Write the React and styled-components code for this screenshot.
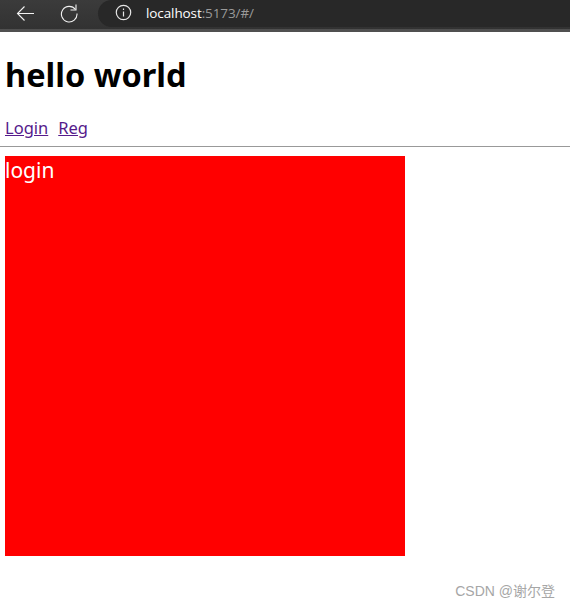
import React from "react";
import styled, { createGlobalStyle } from "styled-components";

const GlobalStyle = createGlobalStyle`
  html, body {
    margin: 0;
    padding: 0;
    background: #fff;
    font-family: "Noto Sans", "Noto Sans CJK SC", sans-serif;
  }
`;

const Page = styled.div`
  position: relative;
  width: 570px;
  height: 607px;
  overflow: hidden;
`;

const Toolbar = styled.div`
  display: flex;
  align-items: center;
  height: 29px;
  padding-left: 15px;
  background: linear-gradient(#3b3b3b, #323232);
  border-bottom: 3px solid #505050;
`;

const ToolButton = styled.svg`
  width: 20px;
  height: 20px;
  margin-top: -3px;
  margin-right: ${(p) => p.$gap}px;
  fill: none;
  stroke: #f2f2f2;
  stroke-width: 1.1;
  flex: none;
`;

const AddressBar = styled.div`
  display: flex;
  align-items: center;
  flex: 1;
  height: 27px;
  margin-top: -2px;
  padding-left: 17px;
  border-radius: 14px 0 0 14px;
  background: #282828;
`;

const InfoIcon = styled.svg`
  width: 17px;
  height: 17px;
  margin-top: -2px;
  margin-right: 14px;
  fill: none;
  stroke: #e6e6e6;
  stroke-width: 1.2;
`;

const Host = styled.span`
  font-family: "Open Sans", sans-serif;
  font-size: 13.5px;
  letter-spacing: -0.1px;
  margin-top: -2px;
  color: #fff;
`;

const Rest = styled.span`
  color: #9a9a9a;
`;

const Content = styled.div`
  padding: 0 0 0 5px;
`;

const Title = styled.h1`
  margin: 21px 0 0;
  font-size: 32.5px;
  line-height: 44px;
  font-weight: 700;
  color: #000;
`;

const Nav = styled.nav`
  display: flex;
  gap: 10px;
  margin-top: 18px;
  font-size: 16.5px;
  line-height: 25px;
`;

const NavLink = styled.a`
  color: #551a8b;
  text-decoration: underline;
`;

const Divider = styled.hr`
  height: 1px;
  margin: 6px 0 9px -5px;
  border: none;
  background: #999;
`;

const RedBox = styled.div`
  width: 400px;
  height: 400px;
  background: #f00;
  color: #fff;
  font-size: 21px;
  line-height: 28px;
`;

const Watermark = styled.div`
  position: absolute;
  right: 15px;
  top: 582px;
  font-family: "Liberation Sans", "Noto Sans CJK SC", sans-serif;
  font-size: 14px;
  line-height: 18px;
  color: #a6a6a6;
`;

export default function App() {
  return (
    <Page>
      <GlobalStyle />
      <Toolbar>
        <ToolButton $gap={24} viewBox="0 0 20 20">
          <path d="M19 10.5H2.5M9.5 3.5l-7 7 7 7" />
        </ToolButton>
        <ToolButton $gap={19} viewBox="0 0 20 20">
          <path d="M16.5 6.5A7.8 7.8 0 1 0 18 10.5" />
          <path d="M17 1.5v5.5h-5.5" />
        </ToolButton>
        <AddressBar>
          <InfoIcon viewBox="0 0 17 17">
            <circle cx="8.5" cy="8.5" r="7.2" />
            <path d="M8.5 7.5v5M8.5 4.5v1.4" />
          </InfoIcon>
          <Host>
            localhost<Rest>:5173/#/</Rest>
          </Host>
        </AddressBar>
      </Toolbar>
      <Content>
        <Title>hello world</Title>
        <Nav>
          <NavLink href="#/login">Login</NavLink>
          <NavLink href="#/reg">Reg</NavLink>
        </Nav>
        <Divider />
        <RedBox>login</RedBox>
      </Content>
      <Watermark>CSDN @谢尔登</Watermark>
    </Page>
  );
}
